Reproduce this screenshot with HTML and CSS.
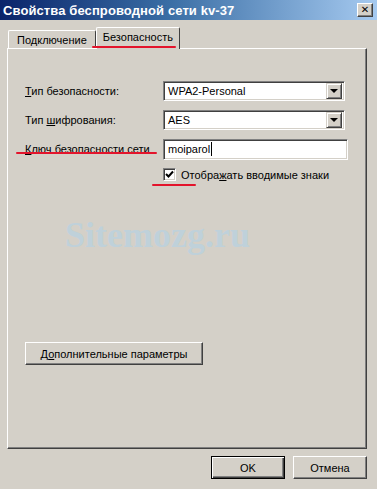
FILE: index.html
```html
<!DOCTYPE html>
<html lang="ru">
<head>
    <meta charset="UTF-8">
    <title>Свойства беспроводной сети kv-37</title>
    <link rel="stylesheet" href="styles.css">
</head>
<body>
    <div class="window">
        <div class="titlebar">
            <span class="title">Свойства беспроводной сети kv-37</span>
            <button class="close-btn">&#x2715;</button>
        </div>

        <div class="content">
            <div class="tabs">
                <div class="tab">Подключение</div>
                <div class="tab active">Безопасность</div>
                <span class="mark mark-tab"></span>
            </div>

            <div class="panel">
                <div class="row">
                    <label class="label"><u>Т</u>ип безопасности:</label>
                    <div class="combo">
                        <span class="combo-text">WPA2-Personal</span>
                        <span class="combo-btn"><span class="arrow"></span></span>
                    </div>
                </div>
                <div class="row">
                    <label class="label">Тип <u>ш</u>ифрования:</label>
                    <div class="combo">
                        <span class="combo-text">AES</span>
                        <span class="combo-btn"><span class="arrow"></span></span>
                    </div>
                </div>
                <div class="row">
                    <label class="label"><u>К</u>люч безопасности сети</label>
                    <div class="field">moiparol<span class="caret"></span></div>
                </div>
                <div class="check-row">
                    <span class="checkbox">
                        <svg width="9" height="9" viewBox="0 0 9 9"><path d="M1 4 L3.5 6.5 L8 1.5" fill="none" stroke="#000" stroke-width="2"/></svg>
                    </span>
                    <span>Отобра<u>ж</u>ать вводимые знаки</span>
                </div>

                <div class="watermark">Sitemozg.ru</div>

                <button class="btn btn-advanced">Д<u>о</u>полнительные параметры</button>

                <span class="mark mark-key"></span>
                <span class="mark mark-check"></span>
            </div>

            <div class="footer">
                <button class="btn btn-default">OK</button>
                <button class="btn">Отмена</button>
            </div>
        </div>
    </div>
</body>
</html>
```

FILE: styles.css
```css
/* Окно в стиле Windows 2000 */
body {
    margin: 0;
    background: #d4d0c8;
    font-family: 'Liberation Sans', Arial, sans-serif;
    font-size: 11px;
    color: #000;
    overflow: hidden;
}

.window {
    width: 377px;
    height: 489px;
    background: #d4d0c8;
    box-sizing: border-box;
}

.titlebar {
    height: 20px;
    background: linear-gradient(to right, #0a246a, #3a6ea5 45%, #a6caf0);
    color: #fff;
    display: flex;
    align-items: center;
    justify-content: space-between;
    padding: 0 4px 0 3px;
}

.title {
    font-weight: bold;
    font-size: 13px;
    letter-spacing: 0.1px;
}

.close-btn {
    width: 16px;
    height: 14px;
    padding: 0;
    margin: 0;
    background: #d4d0c8;
    border: 1px solid;
    border-color: #fff #404040 #404040 #fff;
    box-shadow: inset -1px -1px 0 #808080;
    font-size: 10px;
    font-weight: bold;
    line-height: 12px;
    color: #000;
    font-family: 'DejaVu Sans', sans-serif;
}

.content {
    padding: 7px 10px 0 7px;
}

.tabs {
    position: relative;
    display: flex;
    align-items: flex-end;
    height: 21px;
    padding-left: 1px;
}

.tab {
    height: 17px;
    padding: 0 8px;
    line-height: 18px;
    font-size: 11px;
    border: 1px solid;
    border-color: #fff #404040 transparent #fff;
    border-bottom: none;
    border-radius: 2px 2px 0 0;
}

.tab.active {
    height: 21px;
    line-height: 19px;
    padding: 0 6px;
    position: relative;
    z-index: 1;
    background: #d4d0c8;
    margin-bottom: -1px;
}

.panel {
    position: relative;
    height: 401px;
    border: 1px solid;
    border-color: #fff #404040 #404040 #fff;
    box-shadow: inset -1px -1px 0 #808080;
    padding: 32px 0 0 17px;
    box-sizing: border-box;
}

.row {
    display: flex;
    align-items: center;
    height: 20px;
    margin-bottom: 9px;
}

.label {
    width: 138px;
}

.combo {
    width: 182px;
    height: 20px;
    box-sizing: border-box;
    display: flex;
    align-items: center;
    background: #fff;
    border: 1px solid;
    border-color: #808080 #fff #fff #808080;
    box-shadow: inset 1px 1px 0 #404040, inset -1px -1px 0 #d4d0c8;
    padding: 0 2px 0 4px;
}

.combo-text {
    flex: 1;
}

.combo-btn {
    width: 14px;
    height: 14px;
    background: #d4d0c8;
    border: 1px solid;
    border-color: #d4d0c8 #404040 #404040 #d4d0c8;
    box-shadow: inset 1px 1px 0 #fff, inset -1px -1px 0 #808080;
    display: flex;
    align-items: center;
    justify-content: center;
}

.arrow {
    width: 0;
    height: 0;
    border-left: 4px solid transparent;
    border-right: 4px solid transparent;
    border-top: 4px solid #000;
}

.field {
    width: 185px;
    height: 21px;
    box-sizing: border-box;
    display: flex;
    align-items: center;
    background: #fff;
    border: 1px solid;
    border-color: #808080 #fff #fff #808080;
    box-shadow: inset 1px 1px 0 #404040, inset -1px -1px 0 #d4d0c8;
    padding-left: 4px;
}

.caret {
    display: inline-block;
    width: 1px;
    height: 14px;
    background: #000;
    margin-left: 1px;
}

.check-row {
    display: flex;
    align-items: center;
    margin: 4px 0 0 138px;
}

.checkbox {
    width: 13px;
    height: 13px;
    box-sizing: border-box;
    background: #fff;
    border: 1px solid;
    border-color: #808080 #fff #fff #808080;
    box-shadow: inset 1px 1px 0 #404040, inset -1px -1px 0 #d4d0c8;
    display: flex;
    align-items: center;
    justify-content: center;
    margin-right: 5px;
}

.watermark {
    margin: 36px 0 0 40px;
    height: 36px;
    font-family: 'Liberation Serif', 'Times New Roman', serif;
    font-weight: bold;
    font-size: 36px;
    line-height: 36px;
    color: #bcd2de;
    opacity: 0.85;
}

.btn {
    font-family: 'Liberation Sans', Arial, sans-serif;
    font-size: 11px;
    color: #000;
    background: #d4d0c8;
    border: 1px solid;
    border-color: #fff #404040 #404040 #fff;
    box-shadow: inset -1px -1px 0 #808080;
    padding: 0;
    height: 23px;
}

.btn-advanced {
    display: block;
    width: 178px;
    margin-top: 89px;
}

.footer {
    display: flex;
    justify-content: flex-end;
    gap: 8px;
    margin-top: 7px;
}

.footer .btn {
    width: 74px;
}

.btn-default {
    border: 1px solid #000;
    box-shadow: inset 1px 1px 0 #fff, inset -1px -1px 0 #404040, inset -2px -2px 0 #808080;
}

/* красные пометки */
.mark {
    position: absolute;
    height: 2px;
    background: #e3142c;
    border-radius: 1px;
}

.mark-tab {
    left: 85px;
    width: 84px;
    bottom: 0;
    z-index: 2;
}

.mark-key {
    left: 8px;
    top: 103px;
    width: 141px;
}

.mark-check {
    left: 144px;
    top: 135px;
    width: 44px;
}
```
